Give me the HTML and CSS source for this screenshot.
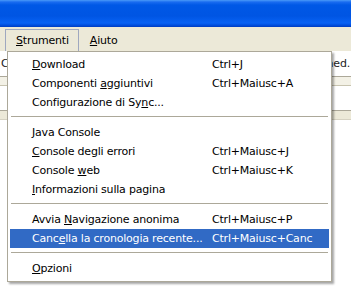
FILE: index.html
```html
<!DOCTYPE html>
<html lang="it">
<head>
    <meta charset="UTF-8">
    <title>Strumenti</title>
    <link rel="stylesheet" href="styles.css">
</head>
<body>
<div class="window">
    <!-- Title bar -->
    <div class="titlebar"></div>

    <!-- Menu bar -->
    <div class="menubar">
        <div class="menubar-item open"><u>S</u>trumenti</div>
        <div class="menubar-item"><u>A</u>iuto</div>
    </div>

    <!-- Page behind the menu -->
    <div class="content">
        <div class="tabs">
            <span class="tab-left">C</span>
            <span class="tab-right">ned.</span>
        </div>
        <div class="strip"></div>
        <div class="blank"></div>
        <div class="band"></div>
    </div>

    <!-- Dropdown -->
    <div class="dropdown">
        <div class="item"><span class="label"><u>D</u>ownload</span><span class="key">Ctrl+J</span></div>
        <div class="item"><span class="label">Componenti <u>a</u>ggiuntivi</span><span class="key">Ctrl+Maiusc+A</span></div>
        <div class="item"><span class="label">Configurazione di Sy<u>n</u>c...</span><span class="key"></span></div>
        <div class="sep"></div>
        <div class="item"><span class="label"><u>J</u>ava Console</span><span class="key"></span></div>
        <div class="item"><span class="label"><u>C</u>onsole degli errori</span><span class="key">Ctrl+Maiusc+J</span></div>
        <div class="item"><span class="label">Console <u>w</u>eb</span><span class="key">Ctrl+Maiusc+K</span></div>
        <div class="item"><span class="label"><u>I</u>nformazioni sulla pagina</span><span class="key"></span></div>
        <div class="sep"></div>
        <div class="item"><span class="label">Avvia <u>N</u>avigazione anonima</span><span class="key">Ctrl+Maiusc+P</span></div>
        <div class="item active"><span class="label">Canc<u>e</u>lla la cronologia recente...</span><span class="key">Ctrl+Maiusc+Canc</span></div>
        <div class="sep"></div>
        <div class="item"><span class="label"><u>O</u>pzioni</span><span class="key"></span></div>
    </div>
</div>
</body>
</html>
```

FILE: styles.css
```css
/* Global styles */
* {
    margin: 0;
    padding: 0;
    box-sizing: border-box;
}

body {
    font-family: "DejaVu Sans", sans-serif;
    font-size: 11px;
    letter-spacing: -0.2px;
    background-color: white;
    color: black;
}

.window {
    position: relative;
    width: 351px;
    height: 301px;
    overflow: hidden;
}

/* Title bar */
.titlebar {
    height: 27px;
    background: linear-gradient(to bottom, #4a9af8 0, #1a6cf0 2px, #0058e6 5px, #0055e3 16px, #0862f4 23px, #0050e0 25px, #003cc0 27px);
}

/* Menu bar */
.menubar {
    display: flex;
    height: 24px;
    padding: 2px 0 0 5px;
    background-color: #ece9d8;
}

.menubar-item {
    display: flex;
    align-items: center;
    padding: 0 9px 0 10px;
    border: 1px solid transparent;
    border-bottom: none;
}

.menubar-item.open {
    border-color: #9fa8bf;
    background-color: #ece9d8;
}

/* Content behind the menu */
.tabs {
    display: flex;
    justify-content: space-between;
    align-items: center;
    height: 26px;
    padding: 0 1px;
    background-color: white;
    border-bottom: 1px solid #aca899;
    color: #222;
}

.strip {
    height: 9px;
    background-color: #f3f1e6;
    border-bottom: 1px solid #c8c4b0;
}

.blank {
    height: 24px;
    background-color: white;
}

.band {
    height: 10px;
    background-color: #ece9d8;
    border-top: 1px solid #aca899;
    border-bottom: 1px solid #d6d2c2;
}

/* Dropdown menu */
.dropdown {
    position: absolute;
    left: 7px;
    top: 51px;
    width: 325px;
    padding: 3px 2px 3px 2px;
    background-color: white;
    border: 1px solid #aca899;
    box-shadow: 2px 2px 2px rgba(0, 0, 0, 0.35);
}

.item {
    display: flex;
    align-items: center;
    height: 19px;
    padding-left: 22px;
    white-space: nowrap;
}

.item .label {
    flex: none;
    width: 180px;
    min-width: 0;
}

.item.active {
    background-color: #316ac5;
    color: white;
}

.sep {
    height: 1px;
    margin: 4px 1px 6px;
    background-color: #aca899;
}
```
